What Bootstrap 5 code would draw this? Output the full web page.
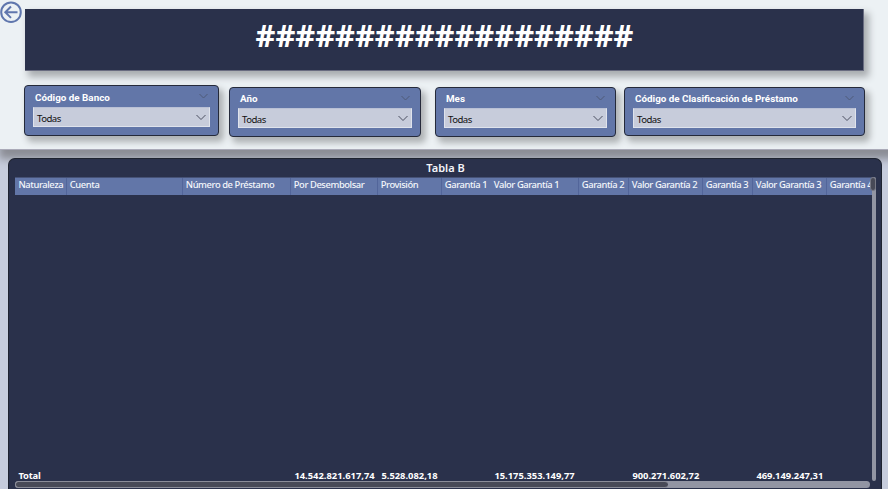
<!DOCTYPE html>
<html lang="es">
<head>
<meta charset="utf-8">
<meta name="viewport" content="width=device-width, initial-scale=1">
<title>Tabla B</title>
<link href="https://cdn.jsdelivr.net/npm/bootstrap@5.3.0/dist/css/bootstrap.min.css" rel="stylesheet">
<style>
body{width:888px;height:489px;background:#c6ccdc;font-family:"Noto Sans","Open Sans",sans-serif;font-size:9.4px;line-height:12px}
.top-zone{height:150px;background:#ecf1f4;border-bottom:1px solid #aaaab8;box-shadow:4px 4px 8px 5px #8b8d95;padding:9px 0 0 0}
.back-btn{left:0;top:1px;width:23px;height:23px}
.banner{width:839px;height:62px;margin-left:25px;background:#2a314b;border-right:1px solid #696c80;border-bottom:1px solid #696c80;box-shadow:4px 5px 7px 1px #a9adb0}
.banner h1{font:700 30.8px/52px "Open Sans",sans-serif;color:#fff;padding-left:1px}
.filters{padding-left:24px;padding-top:14px}
.slicer{height:50px;margin-top:2px;background:#6276a8;border:1px solid #252a3a;border-radius:4px;box-shadow:4px 5px 6px 1px #afb3b5;padding:5px 8px 0 8px;color:#fff}
.slicer-1{width:195px;height:51px;margin-top:0;margin-right:10px}
.slicer-2{width:192px;margin-right:14px}
.slicer-3{width:181px;margin-right:8px}
.slicer-4{width:241px;height:49px}
.slicer-head{height:15px;padding:0 2px;font:700 9.85px/12px Roboto,sans-serif}
.slicer-1 .slicer-head{height:15px;line-height:13px}
.slicer-head svg{width:9px;height:6px;margin-top:2px}
.pick{height:20px;background:#c7ccdb;border:1px solid #dfe3ec;border-top-color:#b9c0d5;padding:0 4px 0 3px;color:#111;font:9.6px/20px "Noto Sans",sans-serif}
.slicer-1 .pick{margin-top:1px}
.pick span{letter-spacing:-.5px;padding-top:4px}
.pick svg{width:10px;height:7px;margin-right:-1px}
.panel{width:874px;height:340px;margin:8px 0 0 8px;background:#2a314b;border:1px solid #1e2330;border-bottom:0;border-radius:7px 7px 0 0;padding:0 0 0 6px}
.panel h2{height:18px;font:600 11px/18px "Noto Sans",sans-serif;color:#f5f6fa;padding-right:5px}
.grid-area{width:861px;height:304px}
.view{width:857px}
.heads{height:18px;background:#6276a8;border-top:1px solid #465276}
.cell{flex:none;padding-left:2.8px;border-left:1px solid #52659a;color:#f4f6fb;font-weight:500;line-height:13px;letter-spacing:-.42px}
.cell:first-child,.cell.plain{border-left-color:transparent}
.cell:first-child{padding-left:2.5px}
.totals{margin-bottom:-1px}
.totals .cell{border-color:transparent;font-weight:700;line-height:12px;color:#fff;letter-spacing:0;padding-left:3.4px}
.totals .c1{padding-left:2.5px;letter-spacing:-.2px}
.c1{width:51px}.c2{width:116px}.c3{width:108px}.c4{width:87px}.c5{width:64px}.c6{width:49px}.c7{width:88px}.c8{width:50px}.c9{width:74px}.c10{width:50px}.c11{width:74px}.c12{width:50px}
.vbar{width:4px;background:#9295a3;border-radius:3px}
.vbar i{display:block;width:6px;height:14px;margin-left:-2px;background:#484a57;border:1px solid #777985;border-radius:3px}
.hbar{width:855px;height:7px;background:#9295a3;border-radius:4px}
.hbar i{display:block;width:653px;height:7px;background:#484a57;border:1px solid #8b8d99;border-right:0;border-radius:4px}
</style>
<script src="https://cdn.jsdelivr.net/npm/bootstrap@5.3.0/dist/js/bootstrap.bundle.min.js"></script>
</head>
<body class="overflow-hidden">
<header class="top-zone position-relative">
  <svg class="back-btn position-absolute" viewBox="0 0 23 23" fill="none" stroke="#5f76ad" stroke-width="2"><circle cx="11" cy="11.2" r="9.8"/><path d="M17.5 11.2H5.5M11 5.5L5.3 11.2L11 16.9"/></svg>
  <div class="banner text-center"><h1 class="m-0">###################</h1></div>
  <div class="filters d-flex">
    <section class="slicer slicer-1">
      <div class="slicer-head d-flex justify-content-between"><span>Código de Banco</span><svg viewBox="0 0 9 6" fill="none" stroke="#4f5a78"><path d="M.5 1L4.5 5L8.5 1"/></svg></div>
      <div class="pick d-flex justify-content-between align-items-center"><span>Todas</span><svg viewBox="0 0 10 7" fill="none" stroke="#4a4f60"><path d="M.5 1L5 5.5L9.5 1"/></svg></div>
    </section>
    <section class="slicer slicer-2">
      <div class="slicer-head d-flex justify-content-between"><span>Año</span><svg viewBox="0 0 9 6" fill="none" stroke="#4f5a78"><path d="M.5 1L4.5 5L8.5 1"/></svg></div>
      <div class="pick d-flex justify-content-between align-items-center"><span>Todas</span><svg viewBox="0 0 10 7" fill="none" stroke="#4a4f60"><path d="M.5 1L5 5.5L9.5 1"/></svg></div>
    </section>
    <section class="slicer slicer-3">
      <div class="slicer-head d-flex justify-content-between"><span>Mes</span><svg viewBox="0 0 9 6" fill="none" stroke="#4f5a78"><path d="M.5 1L4.5 5L8.5 1"/></svg></div>
      <div class="pick d-flex justify-content-between align-items-center"><span>Todas</span><svg viewBox="0 0 10 7" fill="none" stroke="#4a4f60"><path d="M.5 1L5 5.5L9.5 1"/></svg></div>
    </section>
    <section class="slicer slicer-4">
      <div class="slicer-head d-flex justify-content-between"><span>Código de Clasificación de Préstamo</span><svg viewBox="0 0 9 6" fill="none" stroke="#4f5a78"><path d="M.5 1L4.5 5L8.5 1"/></svg></div>
      <div class="pick d-flex justify-content-between align-items-center"><span>Todas</span><svg viewBox="0 0 10 7" fill="none" stroke="#4a4f60"><path d="M.5 1L5 5.5L9.5 1"/></svg></div>
    </section>
  </div>
</header>
<main class="panel position-relative">
  <h2 class="m-0 text-center">Tabla B</h2>
  <div class="grid-area d-flex">
    <div class="view d-flex flex-column justify-content-between">
      <div class="heads d-flex text-nowrap overflow-hidden">
        <div class="cell c1"><span>Naturaleza</span></div><div class="cell c2"><span>Cuenta</span></div><div class="cell c3"><span>Número de Préstamo</span></div><div class="cell c4"><span>Por Desembolsar</span></div><div class="cell c5"><span>Provisión</span></div><div class="cell c6"><span>Garantía 1</span></div><div class="cell c7 plain"><span>Valor Garantía 1</span></div><div class="cell c8"><span>Garantía 2</span></div><div class="cell c9"><span>Valor Garantía 2</span></div><div class="cell c10"><span>Garantía 3</span></div><div class="cell c11"><span>Valor Garantía 3</span></div><div class="cell c12"><span>Garantía 4</span></div>
      </div>
      <div class="totals d-flex text-nowrap overflow-hidden">
        <div class="cell c1"><span>Total</span></div><div class="cell c2"></div><div class="cell c3"></div><div class="cell c4"><span>14.542.821.617,74</span></div><div class="cell c5"><span>5.528.082,18</span></div><div class="cell c6"></div><div class="cell c7"><span>15.175.353.149,77</span></div><div class="cell c8"></div><div class="cell c9"><span>900.271.602,72</span></div><div class="cell c10"></div><div class="cell c11"><span>469.149.247,31</span></div><div class="cell c12"></div>
      </div>
    </div>
    <div class="vbar"><i></i></div>
  </div>
  <div class="hbar"><i></i></div>
</main>
</body>
</html>
